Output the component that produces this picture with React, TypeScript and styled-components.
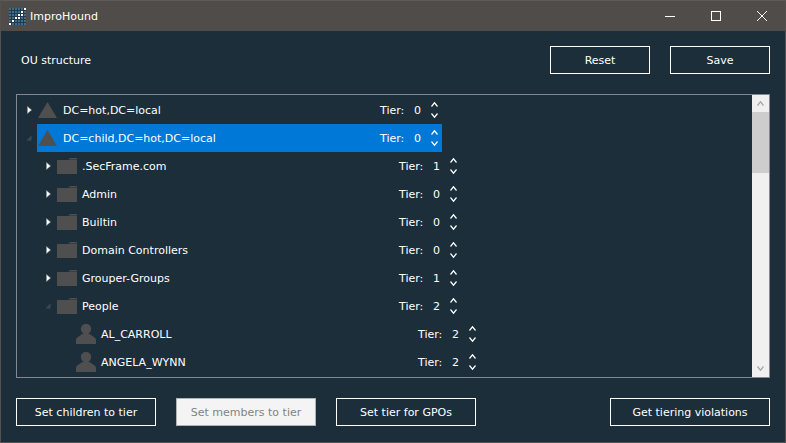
import styled, { createGlobalStyle } from "styled-components";

const GlobalStyle = createGlobalStyle`
  html, body {
    margin: 0;
    padding: 0;
    background: #1c2e3a;
  }
  body {
    font-family: "DejaVu Sans", "Noto Sans", sans-serif;
    font-size: 11px;
    color: #ffffff;
  }
`;

const Window = styled.div`
  width: 786px;
  height: 443px;
  box-sizing: border-box;
  border: 1px solid #54514e;
  border-top-color: #5e5b58;
  background: #1c2e3a;
  display: flex;
  flex-direction: column;
  overflow: hidden;
`;

const TitleBar = styled.div`
  height: 30px;
  flex: none;
  background: #4f4c49;
  display: flex;
  align-items: center;
  padding-left: 8px;
`;

const AppName = styled.span`
  margin-left: 4px;
  font-size: 11px;
  flex: 1;
`;

const WinButton = styled.div`
  width: 46px;
  height: 30px;
  display: flex;
  align-items: center;
  justify-content: center;
`;

const Content = styled.div`
  flex: 1;
  display: flex;
  flex-direction: column;
  padding: 15px 15px 16px;
  min-height: 0;
`;

const TopRow = styled.div`
  display: flex;
  align-items: center;
  height: 28px;
  gap: 20px;
`;

const SectionLabel = styled.div`
  flex: 1;
  padding-left: 5px;
`;

const ActionButton = styled.button<{ $width: number }>`
  width: ${(p) => p.$width}px;
  height: 28px;
  box-sizing: border-box;
  border: 1px solid #ffffff;
  background: ${(p) => (p.disabled ? "#f4f4f4" : "transparent")};
  border-color: ${(p) => (p.disabled ? "#adb2b5" : "#ffffff")};
  color: ${(p) => (p.disabled ? "#838383" : "#ffffff")};
  font: inherit;
  padding: 0;
`;

const TreePanel = styled.div`
  margin-top: 20px;
  height: 285px;
  box-sizing: border-box;
  border: 1px solid #828790;
  display: flex;
  overflow: hidden;
`;

const TreeBody = styled.div`
  flex: 1;
  padding-top: 1px;
  min-width: 0;
`;

const Row = styled.div<{ $level: number }>`
  height: 28px;
  display: flex;
  align-items: center;
  padding-left: ${(p) => 6 + p.$level * 19}px;
`;

const Expander = styled.div`
  width: 14px;
  box-sizing: border-box;
  padding-right: 2px;
  flex: none;
  display: flex;
  justify-content: center;
`;

const Item = styled.div<{ $selected?: boolean }>`
  width: 405px;
  height: 28px;
  flex: none;
  display: flex;
  align-items: center;
  background: ${(p) => (p.$selected ? "#0078d7" : "transparent")};
  padding-left: 1px;
  box-sizing: border-box;
`;

const ItemIcon = styled.div`
  width: 20px;
  height: 20px;
  flex: none;
  margin-right: 5px;
`;

const ItemName = styled.span`
  flex: 1;
  white-space: nowrap;
`;

const TierLabel = styled.span`
  width: 34px;
`;

const TierValue = styled.span`
  width: 13px;
`;

const Spinner = styled.div`
  width: 15px;
  display: flex;
  flex-direction: column;
  align-items: center;
  gap: 6px;
`;

const ScrollBar = styled.div`
  width: 17px;
  flex: none;
  background: #f0f0f0;
  display: flex;
  flex-direction: column;
  align-items: center;
  justify-content: space-between;
  position: relative;
`;

const ScrollArrow = styled.div`
  height: 17px;
  display: flex;
  align-items: center;
`;

const ScrollThumb = styled.div`
  position: absolute;
  top: 17px;
  left: 0;
  width: 17px;
  height: 61px;
  background: #cdcdcd;
`;

const BottomRow = styled.div`
  margin-top: 20px;
  display: flex;
  align-items: center;
  gap: 20px;
`;

const Spacer = styled.div`
  flex: 1;
`;

const Shape = styled.svg`
  display: block;
  overflow: visible;
`;

type Kind = "domain" | "folder" | "user";

interface RowData {
  name: string;
  tier: number;
  level: number;
  kind: Kind;
  expander: "closed" | "open" | "none";
  selected?: boolean;
}

const rows: RowData[] = [
  { name: "DC=hot,DC=local", tier: 0, level: 0, kind: "domain", expander: "closed" },
  { name: "DC=child,DC=hot,DC=local", tier: 0, level: 0, kind: "domain", expander: "open", selected: true },
  { name: ".SecFrame.com", tier: 1, level: 1, kind: "folder", expander: "closed" },
  { name: "Admin", tier: 0, level: 1, kind: "folder", expander: "closed" },
  { name: "Builtin", tier: 0, level: 1, kind: "folder", expander: "closed" },
  { name: "Domain Controllers", tier: 0, level: 1, kind: "folder", expander: "closed" },
  { name: "Grouper-Groups", tier: 1, level: 1, kind: "folder", expander: "closed" },
  { name: "People", tier: 2, level: 1, kind: "folder", expander: "open" },
  { name: "AL_CARROLL", tier: 2, level: 2, kind: "user", expander: "none" },
  { name: "ANGELA_WYNN", tier: 2, level: 2, kind: "user", expander: "none" },
];

const logoLights = ["5-0", "4-1", "3-2", "4-2", "2-3", "3-3", "1-4", "0-5"];

function Logo() {
  const cells = [];
  for (let y = 0; y < 6; y++) {
    for (let x = 0; x < 6; x++) {
      const light = logoLights.includes(`${x}-${y}`);
      cells.push(
        <rect key={`${x}-${y}`} x={x * 3} y={y * 3} width={2} height={2} fill={light ? "#ffffff" : "#3f6f8c"} />
      );
    }
  }
  return (
    <Shape width="17" height="17" viewBox="0 0 17 17">
      <rect width="17" height="17" fill="#22394a" />
      {cells}
    </Shape>
  );
}

function Chevron({ up, color }: { up?: boolean; color: string }) {
  return (
    <Shape width="7" height="5" viewBox="0 0 7 5">
      <path d={up ? "M0.5 4.5 L3.5 0.8 L6.5 4.5" : "M0.5 0.5 L3.5 4.2 L6.5 0.5"} fill="none" stroke={color} strokeWidth="1.2" />
    </Shape>
  );
}

function KindIcon({ kind }: { kind: Kind }) {
  if (kind === "domain") {
    return (
      <Shape width="20" height="20" viewBox="0 0 20 20">
        <path d="M9.5 2 L19 18 H0 Z" fill="#4f4f4f" />
      </Shape>
    );
  }
  if (kind === "folder") {
    return (
      <Shape width="20" height="20" viewBox="0 0 20 20">
        <path d="M0 4 H20 V18 H0 Z M11 3.5 L13 2 H20 V3.5 Z" fill="#4f4f4f" />
      </Shape>
    );
  }
  return (
    <Shape width="20" height="20" viewBox="0 0 20 20">
      <circle cx="10" cy="5" r="5.2" fill="#4f4f4f" />
      <path d="M0 20 V16 C0 13 4 12.5 6 10 H14 C16 12.5 20 13 20 16 V20 Z" fill="#4f4f4f" />
    </Shape>
  );
}

function ExpanderIcon({ state }: { state: RowData["expander"] }) {
  if (state === "closed") {
    return (
      <Shape width="5" height="8" viewBox="0 0 5 8">
        <path d="M0.5 0.5 L4.5 4 L0.5 7.5 Z" fill="#ffffff" stroke="#9a9a9a" strokeWidth="0.5" />
      </Shape>
    );
  }
  if (state === "open") {
    return (
      <Shape width="6" height="6" viewBox="0 0 6 6">
        <path d="M5.5 0.5 V5.5 H0.5 Z" fill="#3e4a52" />
      </Shape>
    );
  }
  return null;
}

export default function App() {
  return (
    <Window>
      <GlobalStyle />
      <TitleBar>
        <Logo />
        <AppName>ImproHound</AppName>
        <WinButton>
          <Shape width="10" height="10" viewBox="0 0 10 10">
            <path d="M0 5.5 H10" stroke="#ffffff" />
          </Shape>
        </WinButton>
        <WinButton>
          <Shape width="10" height="10" viewBox="0 0 10 10">
            <rect x="0.5" y="0.5" width="9" height="9" fill="none" stroke="#ffffff" />
          </Shape>
        </WinButton>
        <WinButton>
          <Shape width="10" height="10" viewBox="0 0 10 10">
            <path d="M0 0 L10 10 M10 0 L0 10" stroke="#ffffff" />
          </Shape>
        </WinButton>
      </TitleBar>
      <Content>
        <TopRow>
          <SectionLabel>OU structure</SectionLabel>
          <ActionButton $width={100}>Reset</ActionButton>
          <ActionButton $width={100}>Save</ActionButton>
        </TopRow>
        <TreePanel>
          <TreeBody>
            {rows.map((row) => (
              <Row key={row.name} $level={row.level}>
                <Expander>
                  <ExpanderIcon state={row.expander} />
                </Expander>
                <Item $selected={row.selected}>
                  <ItemIcon>
                    <KindIcon kind={row.kind} />
                  </ItemIcon>
                  <ItemName>{row.name}</ItemName>
                  <TierLabel>Tier:</TierLabel>
                  <TierValue>{row.tier}</TierValue>
                  <Spinner>
                    <Chevron up color="#ffffff" />
                    <Chevron color="#ffffff" />
                  </Spinner>
                </Item>
              </Row>
            ))}
          </TreeBody>
          <ScrollBar>
            <ScrollArrow>
              <Chevron up color="#a6a6a6" />
            </ScrollArrow>
            <ScrollThumb />
            <ScrollArrow>
              <Chevron color="#a6a6a6" />
            </ScrollArrow>
          </ScrollBar>
        </TreePanel>
        <BottomRow>
          <ActionButton $width={140}>Set children to tier</ActionButton>
          <ActionButton $width={140} disabled>
            Set members to tier
          </ActionButton>
          <ActionButton $width={140}>Set tier for GPOs</ActionButton>
          <Spacer />
          <ActionButton $width={160}>Get tiering violations</ActionButton>
        </BottomRow>
      </Content>
    </Window>
  );
}
